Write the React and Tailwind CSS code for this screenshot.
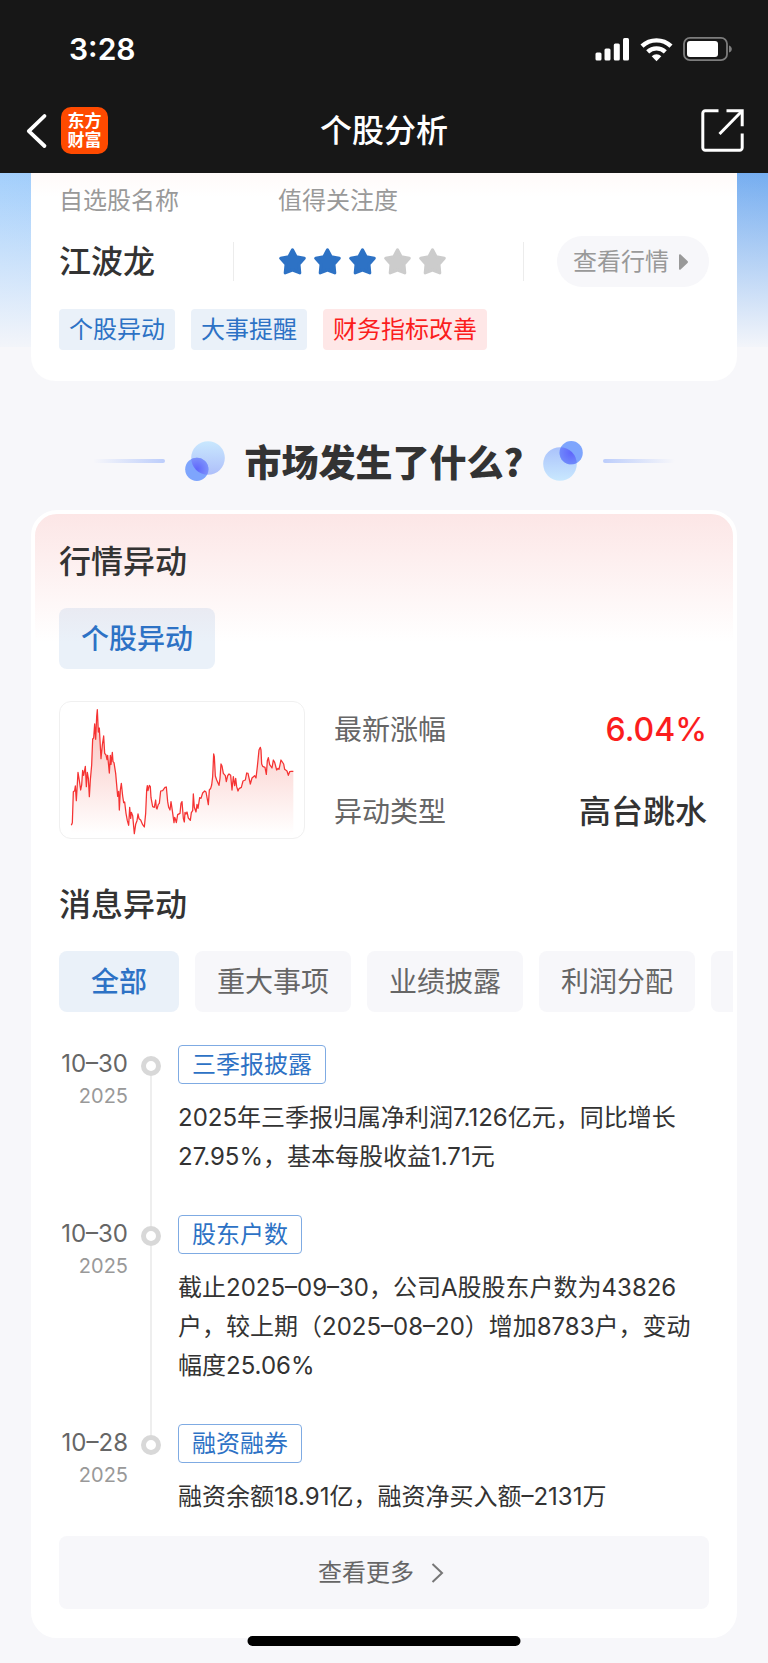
import React from "react";

const STARS = [true, true, true, false, false];

const TAGS = [
  { label: "个股异动", tone: "blue" },
  { label: "大事提醒", tone: "blue" },
  { label: "财务指标改善", tone: "red" },
];

const TABS = ["全部", "重大事项", "业绩披露", "利润分配", "资产重组"];

const EVENTS = [
  {
    date: "10–30",
    year: "2025",
    tag: "三季报披露",
    text: "2025年三季报归属净利润7.126亿元，同比增长27.95%，基本每股收益1.71元",
  },
  {
    date: "10–30",
    year: "2025",
    tag: "股东户数",
    text: "截止2025–09–30，公司A股股东户数为43826户，较上期（2025–08–20）增加8783户，变动幅度25.06%",
  },
  {
    date: "10–28",
    year: "2025",
    tag: "融资融券",
    text: "融资余额18.91亿，融资净买入额–2131万",
  },
];

const PRICE_LINE =
  "64,406 67,398 70,305 74,302 76,288 79,332 84,247 88,272 92,300 95,285 98,241 101,256 106,229 109,290 112,247 115,265 118,320 121,270 125,225 128,147 131,144 134,102 137,148 140,80 142,59 145,126 148,114 153,206 157,165 161,138 164,190 168,195 171,209 173,196 178,249 181,196 183,223 187,187 189,215 192,218 197,250 203,319 206,304 208,360 211,300 214,280 218,318 221,338 224,336 228,370 232,392 236,406 239,352 242,385 244,367 248,377 253,431 257,403 261,392 264,372 267,386 272,390 278,404 283,411 287,370 290,300 292,287 294,302 298,286 301,290 303,323 308,350 313,352 317,330 319,354 321,357 325,343 328,340 332,303 338,302 345,292 349,291 353,335 356,352 360,360 363,335 367,362 372,398 374,382 377,390 379,398 383,374 390,370 393,340 396,335 400,385 403,396 405,367 408,372 411,366 415,384 421,391 424,368 428,362 430,312 433,352 438,366 441,343 444,355 449,323 453,325 458,309 464,303 468,306 475,344 478,300 482,295 485,285 488,260 491,192 493,200 496,258 500,270 507,286 510,265 513,222 516,228 520,250 526,257 529,275 533,257 537,252 542,256 546,300 550,260 554,287 557,265 560,290 564,303 567,296 574,292 579,273 586,270 590,249 594,250 601,282 606,264 614,257 618,264 622,230 627,180 631,172 633,180 635,222 638,229 645,232 649,253 652,212 655,203 659,224 666,234 670,210 674,217 680,240 684,235 687,238 693,210 697,216 701,222 704,238 711,243 715,256 719,245 724,244 730,244";

function StatusBar() {
  return (
    <div className="flex h-[98px] items-center justify-between pr-[35px] pl-[69px] text-white">
      <span className="text-[30px] leading-10 font-semibold">3:28</span>
      <div className="flex items-center gap-[10px]">
        <svg width="35" height="24" viewBox="0 0 35 24" fill="#fff" aria-hidden="true">
          <rect x="0.5" y="15.5" width="6" height="8" rx="1.5" />
          <rect x="9.5" y="11.5" width="6" height="12" rx="1.5" />
          <rect x="18.8" y="6.5" width="6" height="17" rx="1.5" />
          <rect x="28" y="1" width="6" height="22.5" rx="1.5" />
        </svg>
        <svg width="33" height="25" viewBox="0 0 33 25" aria-hidden="true">
          <g fill="none" stroke="#fff" strokeWidth="4.4">
            <path d="M2 9.2a21 21 0 0 1 29 0" />
            <path d="M7.7 14.8a13 13 0 0 1 17.6 0" />
          </g>
          <path d="M11.7 19.2a7.2 7.2 0 0 1 9.6 0L16.5 24.2z" fill="#fff" />
        </svg>
        <svg width="50" height="26" viewBox="0 0 50 26" aria-hidden="true">
          <rect x="1" y="1.8" width="43" height="22.4" rx="6" fill="none" stroke="#7d7d7d" strokeWidth="1.8" />
          <rect x="4" y="5" width="31" height="16" rx="3" fill="#fff" />
          <path d="M46 9.4c1.8.6 2.8 2 2.8 3.6s-1 3-2.8 3.6z" fill="#7d7d7d" />
        </svg>
      </div>
    </div>
  );
}

function NavBar() {
  return (
    <div className="grid h-[75px] grid-cols-[1fr_auto_1fr] items-center px-6 pb-[10px] text-white">
      <div className="flex items-center gap-3">
        <button type="button" aria-label="返回" className="flex">
          <svg width="25" height="36" viewBox="0 0 25 36" fill="none" stroke="#fff" strokeWidth="3.8" strokeLinecap="round" strokeLinejoin="round">
            <path d="M20.5 3 4.8 18.2l15.7 14.8" />
          </svg>
        </button>
        <div className="flex h-[47px] w-[47px] flex-col items-center justify-center rounded-[10px] bg-[#ff4a00] text-[17px] leading-[19px] font-bold">
          <span>东方</span>
          <span>财富</span>
        </div>
      </div>
      <h1 className="text-[32px] leading-[48px] font-medium">个股分析</h1>
      <button type="button" aria-label="分享" className="flex justify-self-end">
        <svg width="43" height="43" viewBox="0 0 43 43" fill="none" stroke="#fff" strokeWidth="3">
          <path d="M17.5 1.8H4.3a2.5 2.5 0 0 0-2.5 2.5v34.4a2.5 2.5 0 0 0 2.5 2.5h34.4a2.5 2.5 0 0 0 2.5-2.5V24.5" />
          <path d="M25.5 1.8h15.7v15.4" />
          <path d="M40.5 2.5 18.5 25" />
        </svg>
      </button>
    </div>
  );
}

function Star({ on }) {
  return (
    <svg
      width="29"
      height="29"
      viewBox="0 0 29 29"
      strokeWidth="3"
      strokeLinejoin="round"
      className={on ? "fill-[#2d72c5] stroke-[#2d72c5]" : "fill-[#cccccc] stroke-[#cccccc]"}
      aria-hidden="true"
    >
      <path d="M14.5 2.8 18.2 9.6l8.1 1.7-5.3 6 .8 8.6-7.3-2.9-7.3 2.9.8-8.6-5.3-6 8.1-1.7z" />
    </svg>
  );
}

function StockCard() {
  return (
    <section className="mx-[31px] rounded-b-[24px] bg-white bg-[linear-gradient(to_bottom,#fffaf9,#ffffff)] bg-[length:100%_24px] bg-no-repeat px-7 pt-[10px] pb-[31px]">
      <div className="flex text-[24px] leading-9 text-[#999999]">
        <span className="w-[219px]">自选股名称</span>
        <span>值得关注度</span>
      </div>
      <div className="mt-[17px] flex h-[51px] items-center">
        <div className="flex h-[39px] w-[175px] items-center border-r border-[#ececec] text-[32px] font-medium text-[#333333]">
          江波龙
        </div>
        <div className="flex h-[39px] flex-1 items-center gap-[6px] border-r border-[#ececec] pl-11" role="img" aria-label="值得关注度 3 星">
          {STARS.map((on, i) => (
            <Star key={i} on={on} />
          ))}
        </div>
        <button type="button" className="ml-[33px] flex h-[51px] items-center gap-[10px] rounded-full bg-[#f7f7fa] pr-[21px] pl-4 text-[24px] text-[#999999]">
          查看行情
          <svg width="9" height="16" viewBox="0 0 9 16" fill="#999" aria-hidden="true">
            <path d="M0 1.2C0 .3.9-.2 1.6.4l6.9 6.5c.6.6.6 1.5 0 2.1l-6.9 6.6c-.7.6-1.6.1-1.6-.8z" />
          </svg>
        </button>
      </div>
      <ul className="mt-[22px] flex gap-4 text-[24px]">
        {TAGS.map((t) => (
          <li
            key={t.label}
            className={
              t.tone === "blue"
                ? "flex h-[41px] items-center rounded bg-[#eaf1f9] px-[10px] text-[#2d72c5]"
                : "flex h-[41px] items-center rounded bg-[#fee7e7] px-[10px] text-[#fb1d1d]"
            }
          >
            {t.label}
          </li>
        ))}
      </ul>
    </section>
  );
}

function SectionHeading() {
  return (
    <div className="flex items-center justify-center gap-5 pt-[60px] pb-[29px]">
      <span className="h-1 w-[72px] rounded-full bg-linear-to-r from-transparent to-[#bccdfb]" />
      <svg width="40" height="40" viewBox="0 0 40 40" aria-hidden="true">
        <defs>
          <linearGradient id="blobA" x1="0" y1="0" x2="0" y2="1">
            <stop offset="0" stopColor="#c9e8fe" />
            <stop offset="1" stopColor="#aebffa" />
          </linearGradient>
          <clipPath id="clipA">
            <circle cx="23" cy="17" r="16.8" />
          </clipPath>
          <radialGradient id="overlapA">
            <stop offset="0" stopColor="#5f66fb" />
            <stop offset="1" stopColor="#7c90fb" />
          </radialGradient>
        </defs>
        <circle cx="23" cy="17" r="16.8" fill="url(#blobA)" />
        <circle cx="11.8" cy="28.3" r="11.6" fill="#7ea5fd" />
        <circle cx="11.8" cy="28.3" r="11.6" fill="url(#overlapA)" clipPath="url(#clipA)" />
      </svg>
      <h2 className="font-['Noto_Sans_CJK_SC',sans-serif] text-[37px] leading-9 font-black text-[#333333]">市场发生了什么?</h2>
      <svg width="40" height="40" viewBox="0 0 40 40" aria-hidden="true">
        <defs>
          <linearGradient id="blobB" x1="0" y1="0" x2="0" y2="1">
            <stop offset="0" stopColor="#aac2fb" />
            <stop offset="1" stopColor="#c9e8fe" />
          </linearGradient>
          <clipPath id="clipB">
            <circle cx="17" cy="23" r="16.8" />
          </clipPath>
          <radialGradient id="overlapB">
            <stop offset="0" stopColor="#5f66fb" />
            <stop offset="1" stopColor="#6f88fb" />
          </radialGradient>
        </defs>
        <circle cx="17" cy="23" r="16.8" fill="url(#blobB)" />
        <circle cx="28.2" cy="11.7" r="11.6" fill="#7ea5fd" />
        <circle cx="28.2" cy="11.7" r="11.6" fill="url(#overlapB)" clipPath="url(#clipB)" />
      </svg>
      <span className="h-1 w-[72px] rounded-full bg-linear-to-l from-transparent to-[#bccdfb]" />
    </div>
  );
}

function PriceChart() {
  return (
    <div className="h-[138px] w-[246px] shrink-0 overflow-hidden rounded-xl border border-[#f0f0f0]">
      <svg className="h-full w-full" viewBox="30 36 732 408" role="img" aria-label="股价走势">
        <defs>
          <linearGradient id="area" x1="0" y1="0" x2="0" y2="1">
            <stop offset="0" stopColor="#f04a3c" stopOpacity="0.35" />
            <stop offset="1" stopColor="#f04a3c" stopOpacity="0" />
          </linearGradient>
        </defs>
        <polygon points={`64,432 ${PRICE_LINE} 730,432`} fill="url(#area)" />
        <polyline points={PRICE_LINE} fill="none" stroke="#f53333" strokeWidth="3.8" strokeLinejoin="round" />
      </svg>
    </div>
  );
}

function Timeline() {
  return (
    <ol className="mt-[33px]">
      {EVENTS.map((e, i) => {
        const last = i === EVENTS.length - 1;
        return (
          <li key={e.tag} className="flex">
            <div className="flex w-[69px] shrink-0 flex-col items-end">
              <span className="text-[24px] leading-[38px] text-[#666666]">{e.date}</span>
              <span className="text-[20px] leading-[26px] text-[#999999]">{e.year}</span>
            </div>
            <div className="mr-[17px] ml-[13px] flex w-5 shrink-0 flex-col items-center">
              <span className={i === 0 ? "h-[11px] w-[2px]" : "h-[11px] w-[2px] bg-[#eeeeee]"} />
              <span className="h-5 w-5 rounded-full border-[5px] border-[#d8d8d8] bg-white" />
              {!last && <span className="w-[2px] flex-1 bg-[#eeeeee]" />}
            </div>
            <div className={last ? "flex-1" : "flex-1 pb-[39px]"}>
              <span className="inline-flex h-[39px] items-center rounded border border-[#7fabe3] px-[13px] align-top text-[24px] text-[#2d72c5]">
                {e.tag}
              </span>
              <p className="mt-[14px] text-[24px] leading-[39px] text-[#333333]">{e.text}</p>
            </div>
          </li>
        );
      })}
    </ol>
  );
}

function MarketCard() {
  return (
    <section className="mx-[31px] overflow-hidden rounded-[26px] border-4 border-white bg-white bg-[linear-gradient(to_bottom,#fce6e6,#ffffff)] bg-[length:100%_128px] bg-no-repeat px-6 pt-6 pb-[25px]">
      <h3 className="text-[32px] leading-[48px] font-medium text-[#333333]">行情异动</h3>
      <button type="button" className="mt-[22px] flex h-[61px] items-center rounded-lg bg-[#2d72c5]/10 px-[22px] text-[28px] font-medium text-[#2d72c5]">
        个股异动
      </button>
      <div className="mt-8 flex">
        <PriceChart />
        <dl className="flex flex-1 flex-col justify-center gap-[34px] pt-[2px] pr-[2px] pl-[29px]">
          <div className="flex items-center justify-between">
            <dt className="text-[28px] leading-[48px] text-[#666666]">最新涨幅</dt>
            <dd className="text-[32px] leading-[48px] font-medium text-[#fb1d1d]">6.04%</dd>
          </div>
          <div className="flex items-center justify-between">
            <dt className="text-[28px] leading-[48px] text-[#666666]">异动类型</dt>
            <dd className="text-[32px] leading-[48px] font-medium text-[#333333]">高台跳水</dd>
          </div>
        </dl>
      </div>
      <h3 className="mt-[42px] text-[32px] leading-[48px] font-medium text-[#333333]">消息异动</h3>
      <div className="-mr-6 mt-[22px] flex gap-4 overflow-hidden">
        {TABS.map((t, i) => (
          <button
            key={t}
            type="button"
            className={
              i === 0
                ? "h-[61px] shrink-0 rounded-lg bg-[#eaf1f9] px-8 text-[28px] font-medium text-[#2d72c5]"
                : "h-[61px] shrink-0 rounded-lg bg-[#f7f7fa] px-[22px] text-[28px] text-[#666666]"
            }
          >
            {t}
          </button>
        ))}
      </div>
      <Timeline />
      <button type="button" className="mt-5 flex h-[73px] w-full items-center justify-center gap-4 rounded-lg bg-[#f7f7fa] text-[24px] text-[#666666]">
        查看更多
        <svg width="20" height="20" viewBox="0 0 20 20" fill="none" stroke="#777" strokeWidth="2" aria-hidden="true">
          <path d="M2.5 1 12 10l-9.5 9" />
        </svg>
      </button>
    </section>
  );
}

export default function App() {
  return (
    <div className="relative bg-[#f7f7fa] font-[Inter,'Noto_Sans_CJK_SC',sans-serif]">
      <header className="bg-[#171717]">
        <StatusBar />
        <NavBar />
      </header>
      <main className="bg-[linear-gradient(to_bottom,transparent,#f3f5fa),linear-gradient(to_right,#a3cffc,#75adf0)] bg-[length:100%_174px] bg-no-repeat pb-[25px]">
        <StockCard />
        <SectionHeading />
        <MarketCard />
      </main>
      <div className="absolute bottom-[17px] left-1/2 h-[10px] w-[273px] -translate-x-1/2 rounded-full bg-black" />
    </div>
  );
}
